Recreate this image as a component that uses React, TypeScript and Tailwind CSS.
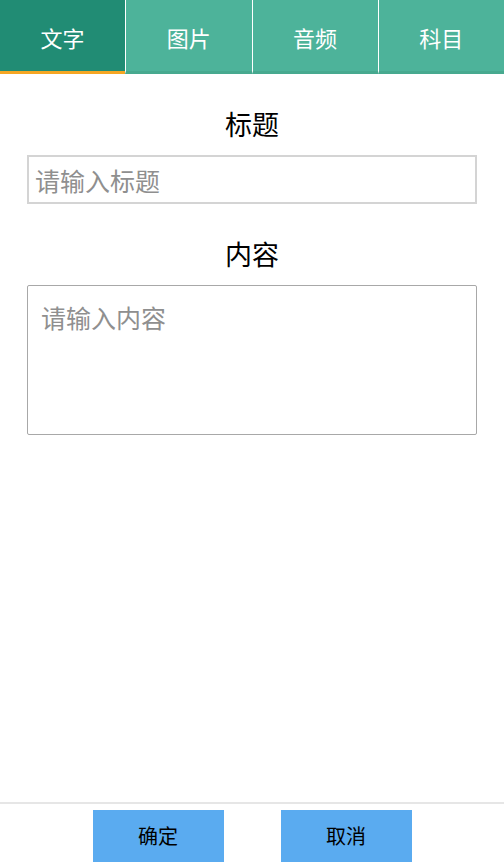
import { useState } from "react";

const TABS = ["文字", "图片", "音频", "科目"];

export default function App() {
  const [active, setActive] = useState(0);

  return (
    <div
      className="flex h-screen flex-col bg-white"
      style={{ fontFamily: '"Noto Sans CJK SC", "Noto Sans", sans-serif' }}
    >
      {/* Tab bar */}
      <div className="flex h-[74px]">
        {TABS.map((t, i) => (
          <button
            key={t}
            onClick={() => setActive(i)}
            className={`flex flex-1 items-center justify-center text-[22px] text-white ${
              i > 0 ? "border-l border-white" : ""
            } ${
              active === i
                ? "border-b-[3px] border-b-[#f5a623] bg-[#218c74] pt-[3px]"
                : "border-b-[3px] border-b-[#47a98f] bg-[#4db39a] pt-[3px]"
            }`}
          >
            {t}
          </button>
        ))}
      </div>

      {/* Form */}
      <div className="flex flex-col px-[27px]">
        <div className="mt-[31px] text-center text-[27px] leading-[38px] text-black">
          标题
        </div>
        <input
          placeholder="请输入标题"
          className="mt-[12px] h-[49px] w-full border-2 border-[#d4d4d4] px-[6px] text-[25px] text-black outline-none placeholder:text-[#8f8f8f]"
        />
        <div className="mt-[31px] text-center text-[27px] leading-[38px] text-black">
          内容
        </div>
        <textarea
          placeholder="请输入内容"
          className="mt-[12px] h-[150px] w-full resize-none rounded-[2px] border border-[#a8a8a8] px-[13px] py-[15px] text-[25px] leading-[32px] text-black outline-none placeholder:text-[#8f8f8f]"
        />
      </div>

      <div className="flex-1" />

      {/* Footer */}
      <div className="flex h-[60px] justify-center gap-[57px] border-t-2 border-[#e6e6e6] pt-[6px]">
        <button className="h-[52px] w-[131px] bg-[#5aabf0] text-[20px] text-black">
          确定
        </button>
        <button className="h-[52px] w-[131px] bg-[#5aabf0] text-[20px] text-black">
          取消
        </button>
      </div>
    </div>
  );
}
